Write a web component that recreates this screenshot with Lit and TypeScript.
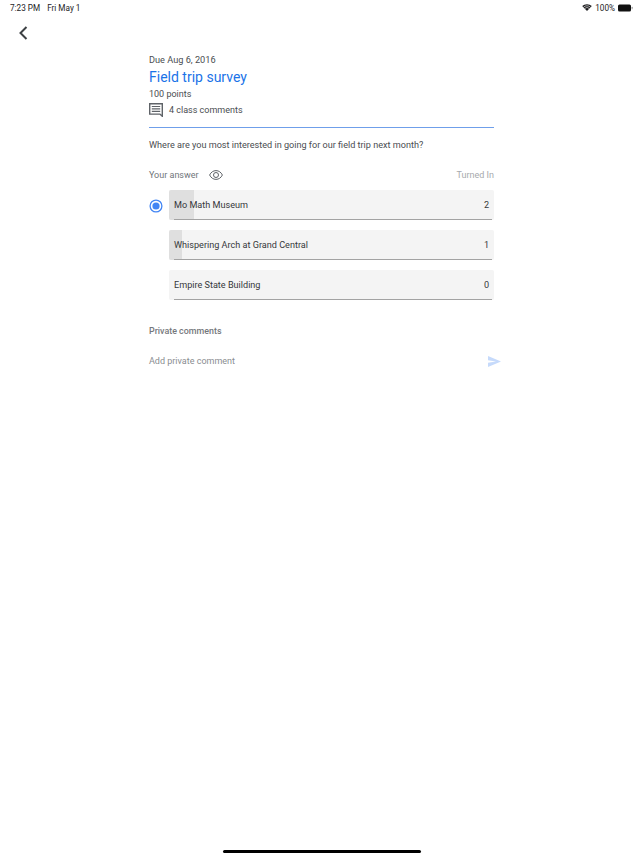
import { LitElement, html, css } from "lit";
import { customElement } from "lit/decorators.js";

const options = [
  { label: "Mo Math Museum", count: 2, fill: 25, selected: true },
  { label: "Whispering Arch at Grand Central", count: 1, fill: 13, selected: false },
  { label: "Empire State Building", count: 0, fill: 0, selected: false },
];

@customElement("app-root")
export class AppRoot extends LitElement {
  static styles = css`
    :host {
      display: flex;
      flex-direction: column;
      height: 858px;
      background: #fff;
      font-family: Roboto, "Liberation Sans", sans-serif;
      color: #4a4d51;
      overflow: hidden;
    }

    .status {
      display: flex;
      justify-content: space-between;
      align-items: center;
      height: 15px;
      padding: 0 10px 0 10px;
      font-size: 8.2px;
      color: #1c1c1e;
    }
    .status .left {
      display: flex;
      gap: 7px;
    }
    .status .right {
      display: flex;
      align-items: center;
      gap: 3px;
    }

    .back {
      display: block;
      margin: 9px 0 0 18px;
      height: 18px;
    }

    .content {
      margin: 9px 0 0 149px;
      width: 345px;
    }

    .due {
      font-size: 9.2px;
      line-height: 14px;
      margin-top: 2px;
    }
    h1 {
      margin: 0;
      font-size: 14px;
      font-weight: 400;
      line-height: 20px;
      color: #1a73e8;
    }
    .points {
      font-size: 9px;
      line-height: 15px;
    }
    .comments {
      display: flex;
      align-items: center;
      gap: 6px;
      font-size: 9px;
      height: 15px;
    }
    .rule {
      height: 1px;
      background: #6f9fea;
      margin-top: 10px;
    }
    .question {
      font-size: 9.1px;
      line-height: 14px;
      margin-top: 10px;
    }

    .answer-head {
      display: flex;
      align-items: center;
      height: 16px;
      margin-top: 15px;
      font-size: 9px;
      color: #70757a;
    }
    .answer-head svg {
      margin-left: 10px;
    }
    .turned {
      margin-left: auto;
      color: #a6a9ad;
    }

    .options {
      display: flex;
      flex-direction: column;
      gap: 10px;
      margin-top: 7px;
    }
    .option {
      display: flex;
      align-items: center;
    }
    .radio {
      flex: none;
      width: 20px;
      height: 14px;
    }
    .bar {
      position: relative;
      flex: 1;
      display: flex;
      justify-content: space-between;
      align-items: center;
      height: 30px;
      padding: 0 5px;
      background: #f4f4f4;
      border-radius: 2px;
      font-size: 9.1px;
      color: #36383b;
    }
    .fill {
      position: absolute;
      left: 0;
      top: 0;
      bottom: 0;
      background: #dfdfdf;
      border-radius: 2px 0 0 2px;
    }
    .line {
      position: absolute;
      left: 5px;
      right: 2px;
      bottom: 0;
      height: 1px;
      background: #a3a3a3;
    }
    .bar span {
      position: relative;
    }

    .private-title {
      font-size: 8.9px;
      font-weight: 500;
      line-height: 14px;
      color: #75787c;
      margin-top: 24px;
    }
    .private-input {
      display: flex;
      justify-content: space-between;
      align-items: center;
      height: 16px;
      margin: 15px -7px 0 0;
      font-size: 9px;
      color: #8a8d91;
    }

    .home {
      width: 198px;
      height: 3px;
      margin: auto auto 5px;
      border-radius: 2px;
      background: #000;
    }
  `;

  render() {
    return html`
      <div class="status">
        <div class="left"><span>7:23 PM</span><span>Fri May 1</span></div>
        <div class="right">
          <svg width="10" height="7" viewBox="0 0 11 8">
            <path d="M5.5 8 0 2.4A8 8 0 0 1 11 2.4Z" fill="#1c1c1e" />
            <path d="M1.6 3.6a5.6 5.6 0 0 1 7.8 0" fill="none" stroke="#fff" stroke-width=".7" />
            <path d="M3 5.1a3.6 3.6 0 0 1 5 0" fill="none" stroke="#fff" stroke-width=".7" />
          </svg>
          <span>100%</span>
          <svg width="15" height="8" viewBox="0 0 15 8">
            <rect x="0" y="0.5" width="13" height="7" rx="1.5" fill="#111" />
            <rect x="13.6" y="2.7" width="1" height="2.6" rx=".5" fill="#999" />
          </svg>
        </div>
      </div>

      <svg class="back" width="10" height="18" viewBox="0 0 10 18">
        <path d="M8.5 3 2.5 9l6 6" fill="none" stroke="#3c4043" stroke-width="2" />
      </svg>

      <div class="content">
        <div class="due">Due Aug 6, 2016</div>
        <h1>Field trip survey</h1>
        <div class="points">100 points</div>
        <div class="comments">
          <svg width="14" height="14" viewBox="0 0 14 14">
            <path d="M.7.7h12.6v12.6l-2.4-2.2H.7Z" fill="none" stroke="#5f6368" stroke-width="1.4" />
            <path d="M2.8 3.5h8.4M2.8 5.9h8.4M2.8 8.3h8.4" stroke="#5f6368" stroke-width="1.2" />
          </svg>
          <span>4 class comments</span>
        </div>
        <div class="rule"></div>
        <div class="question">Where are you most interested in going for our field trip next month?</div>

        <div class="answer-head">
          <span>Your answer</span>
          <svg width="14" height="10" viewBox="0 0 14 10">
            <path d="M.6 5C2 2.2 4.3.6 7 .6s5 1.6 6.4 4.4C12 7.8 9.7 9.4 7 9.4S2 7.800.6 5Z" fill="none" stroke="#5f6368" stroke-width="1" />
            <circle cx="7" cy="5" r="2.5" fill="none" stroke="#5f6368" stroke-width="1" />
          </svg>
          <span class="turned">Turned In</span>
        </div>

        <div class="options">
          ${options.map(
            (o) => html`
              <div class="option">
                <div class="radio">
                  ${o.selected
                    ? html`<svg width="14" height="14" viewBox="0 0 14 14">
                        <circle cx="7" cy="7" r="5.9" fill="none" stroke="#4285f4" stroke-width="1.3" />
                        <circle cx="7" cy="7" r="3.6" fill="#4285f4" />
                      </svg>`
                    : ""}
                </div>
                <div class="bar">
                  <div class="fill" style="width:${o.fill}px"></div>
                  <div class="line"></div>
                  <span>${o.label}</span>
                  <span>${o.count}</span>
                </div>
              </div>
            `,
          )}
        </div>

        <div class="private-title">Private comments</div>
        <div class="private-input">
          <span>Add private comment</span>
          <svg width="13" height="11" viewBox="0 0 13 11">
            <path d="M0 0 13 5.5 0 11 0 6.8 8 5.5 0 4.2Z" fill="#c6dafb" />
          </svg>
        </div>
      </div>

      <div class="home"></div>
    `;
  }
}
